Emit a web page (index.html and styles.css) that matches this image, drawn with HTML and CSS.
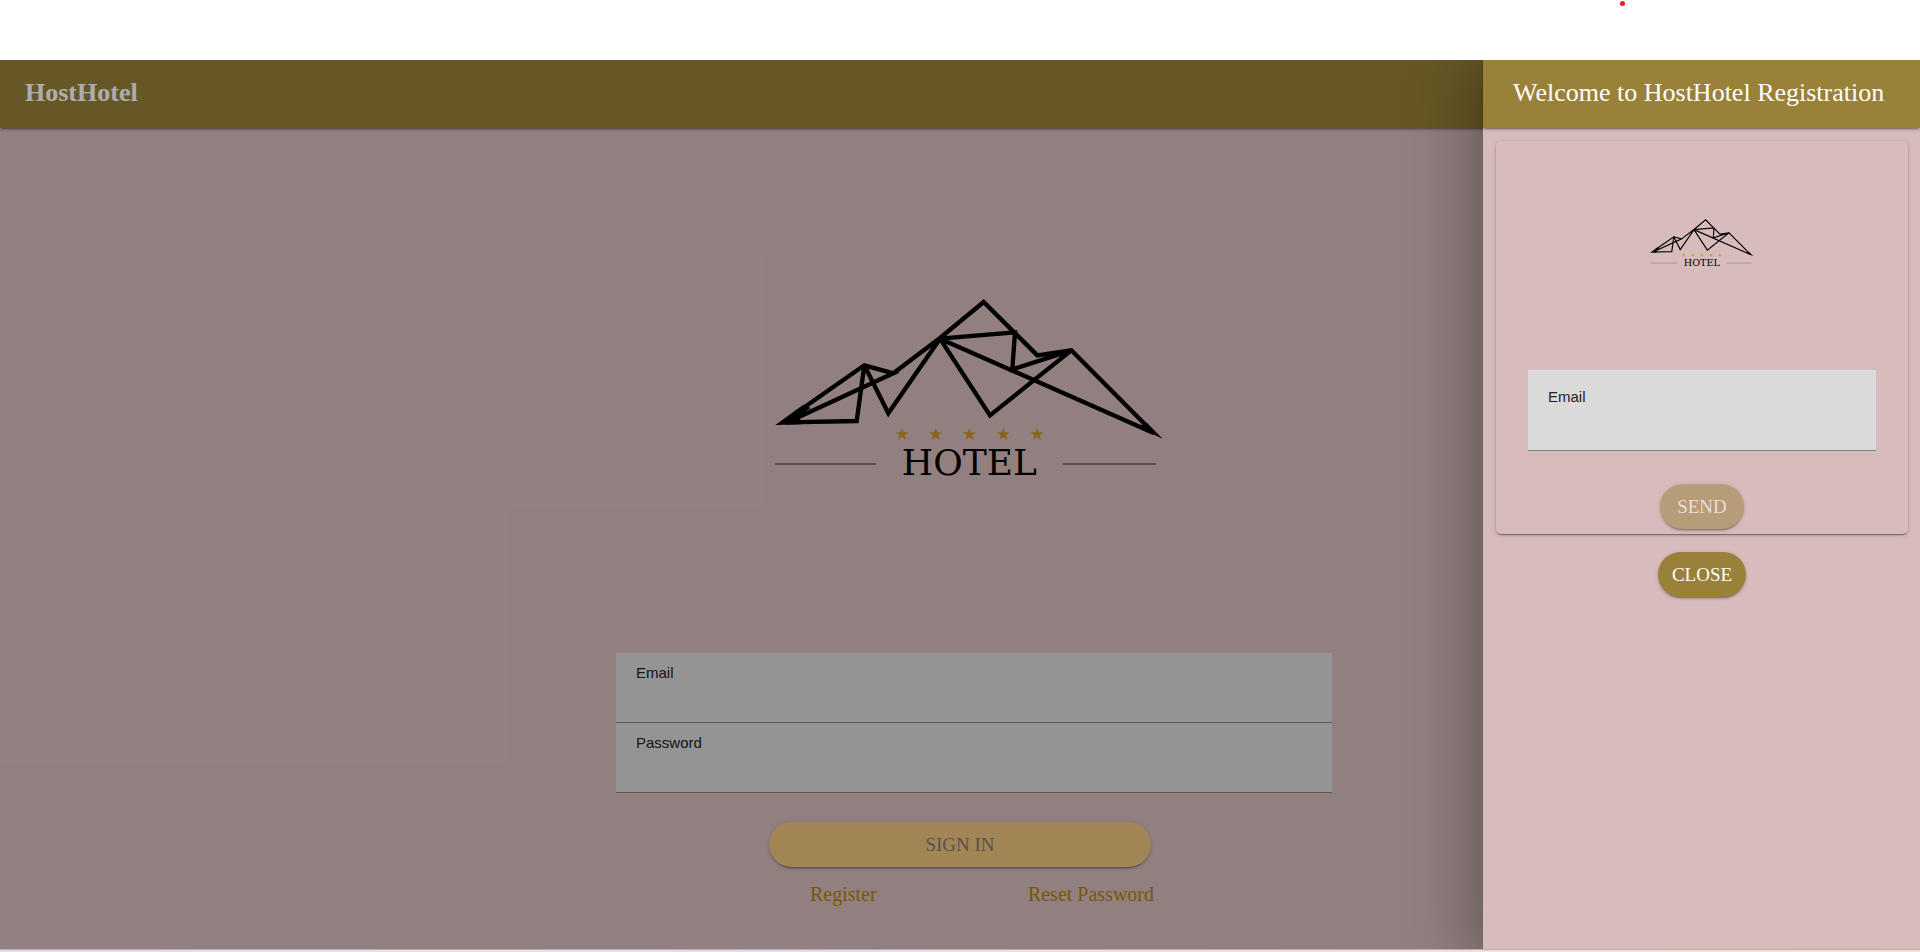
FILE: index.html
```html
<!DOCTYPE html>
<html lang="en">
<head>
<meta charset="utf-8">
<title>HostHotel</title>
<link rel="stylesheet" href="styles.css">
</head>
<body>
<div class="top-strip"><span class="status-dot"></span></div>
<div class="shell">
  <div class="page">
    <header class="toolbar"><h1 class="brand">HostHotel</h1></header>
    <main class="login">
      <svg class="logo" viewBox="12 0 1260 630" role="img" aria-label="Hotel">
        <g class="logo-lines">
          <path d="M400 280 540 174 671 66 832 226 934 211 1181 459 540 176 765 157 757 268 934 211 690 406 540 176 385 400 313 256 290 423 80 427"/>
          <path d="M104 402 313 256 400 280 110 414"/>
        </g>
        <path class="logo-tip" d="M46 435 130 374 152 384 112 412 122 420V433ZM1208 476 1160 428 1130 440Z"/>
        <path class="logo-rule" d="M46 552H348M908 552H1188"/>
        <g class="logo-stars">
          <path d="M426 444l5 13h14l-11 9 4 14-12-8-12 8 4-14-11-9h14z"/>
          <path d="M527 444l5 13h14l-11 9 4 14-12-8-12 8 4-14-11-9h14z"/>
          <path d="M628 444l5 13h14l-11 9 4 14-12-8-12 8 4-14-11-9h14z"/>
          <path d="M730 444l5 13h14l-11 9 4 14-12-8-12 8 4-14-11-9h14z"/>
          <path d="M831 444l5 13h14l-11 9 4 14-12-8-12 8 4-14-11-9h14z"/>
        </g>
        <text class="logo-text" x="628" y="586">HOTEL</text>
      </svg>
      <form class="login-form">
        <div class="field">
          <label for="login-email">Email</label>
          <input id="login-email" type="email">
        </div>
        <div class="field">
          <label for="login-password">Password</label>
          <input id="login-password" type="password">
        </div>
        <div class="sign-in-row"><button class="btn btn-sign-in" type="submit" disabled>SIGN IN</button></div>
        <nav class="links"><a href="#">Register</a><a href="#">Reset Password</a></nav>
      </form>
    </main>
  </div>
  <div class="backdrop"></div>
  <aside class="drawer">
    <header class="toolbar drawer-toolbar"><h2 class="drawer-title">Welcome to HostHotel Registration</h2></header>
    <div class="drawer-body">
      <form class="card">
        <svg class="logo-small" viewBox="0 0 1260 630" role="img" aria-label="Hotel">
          <g class="logo-lines">
            <path d="M400 280 540 174 671 66 832 226 934 211 1181 459 540 176 765 157 757 268 934 211 690 406 540 176 385 400 313 256 290 423 80 427"/>
            <path d="M104 402 313 256 400 280 110 414"/>
          </g>
          <path class="logo-tip" d="M46 435 130 374 152 384 112 412 122 420V433ZM1208 476 1160 428 1130 440Z"/>
          <path class="logo-rule" d="M46 552H348M908 552H1188"/>
          <g class="logo-stars">
            <path d="M426 444l5 13h14l-11 9 4 14-12-8-12 8 4-14-11-9h14z"/>
            <path d="M527 444l5 13h14l-11 9 4 14-12-8-12 8 4-14-11-9h14z"/>
            <path d="M628 444l5 13h14l-11 9 4 14-12-8-12 8 4-14-11-9h14z"/>
            <path d="M730 444l5 13h14l-11 9 4 14-12-8-12 8 4-14-11-9h14z"/>
            <path d="M831 444l5 13h14l-11 9 4 14-12-8-12 8 4-14-11-9h14z"/>
          </g>
          <text class="logo-text" x="628" y="586">HOTEL</text>
        </svg>
        <div class="field field-tall">
          <label for="register-email">Email</label>
          <input id="register-email" type="email">
        </div>
        <button class="btn btn-send" type="submit" disabled>SEND</button>
      </form>
      <button class="btn btn-close" type="button">CLOSE</button>
    </div>
  </aside>
</div>
<div class="bottom-strip"></div>
</body>
</html>
```
FILE: styles.css
```css
* {
  box-sizing: border-box;
}

body {
  margin: 0;
  min-height: 100vh;
  display: flex;
  flex-direction: column;
  background: #fff;
  font-family: "Liberation Serif", "Times New Roman", serif;
}

.top-strip {
  position: relative;
  height: 60px;
}

.status-dot {
  position: absolute;
  top: 1px;
  left: 84.4%;
  width: 5px;
  height: 5px;
  border-radius: 50%;
  background: #e81c24;
}

.shell {
  position: relative;
  flex: 1;
  display: flex;
  overflow: hidden;
}

.page {
  flex: 1;
  display: flex;
  flex-direction: column;
  background: #d8bcbc;
}

.toolbar {
  height: 68px;
  padding: 0 25px 2px;
  display: flex;
  align-items: center;
  background: #998138;
  color: #fff;
  box-shadow: 0 3px 1px -2px rgba(0, 0, 0, 0.2), 0 2px 2px rgba(0, 0, 0, 0.14), 0 1px 5px rgba(0, 0, 0, 0.12);
}

.brand,
.drawer-title {
  margin: 0;
  font-size: 26px;
  line-height: 32px;
}

.drawer-title {
  font-weight: 400;
  white-space: nowrap;
}

.login {
  flex: 1;
  padding: 152px 0 0 28px;
  display: flex;
  flex-direction: column;
  align-items: center;
}

.logo {
  width: 420px;
  height: 210px;
}

.logo-lines {
  fill: none;
  stroke: #000;
  stroke-width: 13;
  stroke-miterlimit: 3;
}

.logo-rule {
  fill: none;
  stroke: #333;
  stroke-width: 3;
}

.logo-stars {
  fill: #c9972c;
}

.logo-text {
  font-family: "DejaVu Serif", serif;
  font-size: 108px;
  text-anchor: middle;
}

.login-form {
  width: 716px;
  max-width: 100%;
  margin-top: 163px;
  display: flex;
  flex-direction: column;
}

.field {
  height: 70px;
  padding: 11px 20px 0;
  display: flex;
  flex-direction: column;
  background: #dadada;
  border-bottom: 1px solid #7b858f;
  font-family: "Liberation Sans", Arial, sans-serif;
  font-size: 15px;
  line-height: 18px;
  color: #222;
}

.field input {
  height: 32px;
  padding: 0;
  border: 0;
  outline: 0;
  background: transparent;
  font: inherit;
}

.btn {
  height: 45px;
  padding: 0 14px;
  border: 0;
  border-radius: 23px;
  font-family: inherit;
  font-size: 19px;
  line-height: 24px;
  color: #fff;
  background: #998138;
  box-shadow: 0 3px 1px -2px rgba(0, 0, 0, 0.2), 0 2px 2px rgba(0, 0, 0, 0.14), 0 1px 5px rgba(0, 0, 0, 0.12);
}

.sign-in-row {
  margin-top: 29px;
  padding-right: 28px;
  display: flex;
  justify-content: center;
}

.btn-sign-in {
  width: 382px;
  background: #edc57e;
  color: #877679;
}

.links {
  width: 360px;
  margin: 15px auto 0;
  padding-left: 16px;
  display: flex;
  justify-content: space-between;
  font-size: 20px;
  line-height: 24px;
}

.links a {
  color: #b08108;
  text-decoration: none;
}

.backdrop {
  position: absolute;
  inset: 0;
  background: rgba(0, 0, 0, 0.32);
}

.drawer {
  position: absolute;
  top: 0;
  right: 0;
  bottom: 0;
  width: 437px;
  background: #d8bcbc;
  box-shadow: 0 8px 60px 8px rgba(0, 0, 0, 0.34);
}

.drawer-toolbar {
  padding-left: 30px;
}

.drawer-body {
  padding: 13px 12px 0 13px;
  display: flex;
  flex-direction: column;
  align-items: center;
}

.card {
  width: 100%;
  padding: 73px 32px 5px;
  display: flex;
  flex-direction: column;
  align-items: center;
  border-radius: 5px;
  box-shadow: 0 3px 1px -2px rgba(0, 0, 0, 0.3), 0 1px 2px rgba(0, 0, 0, 0.2), 0 1px 5px rgba(0, 0, 0, 0.14);
}

.logo-small {
  width: 112px;
  height: 56px;
}

.field-tall {
  width: 100%;
  height: 81px;
  margin-top: 100px;
  padding-top: 18px;
}

.btn-send {
  margin-top: 33px;
  padding: 0 17px;
  background: #b69d78;
  color: #ecdcdc;
}

.btn-close {
  margin-top: 18px;
}

.bottom-strip {
  height: 3px;
  border-top: 1px solid #b9aeaa;
  background: linear-gradient(90deg, #dcdce8, #eadfe6 25%, #dcdcec 40%, #f0dde0 55%, #f4e2da);
}
```
